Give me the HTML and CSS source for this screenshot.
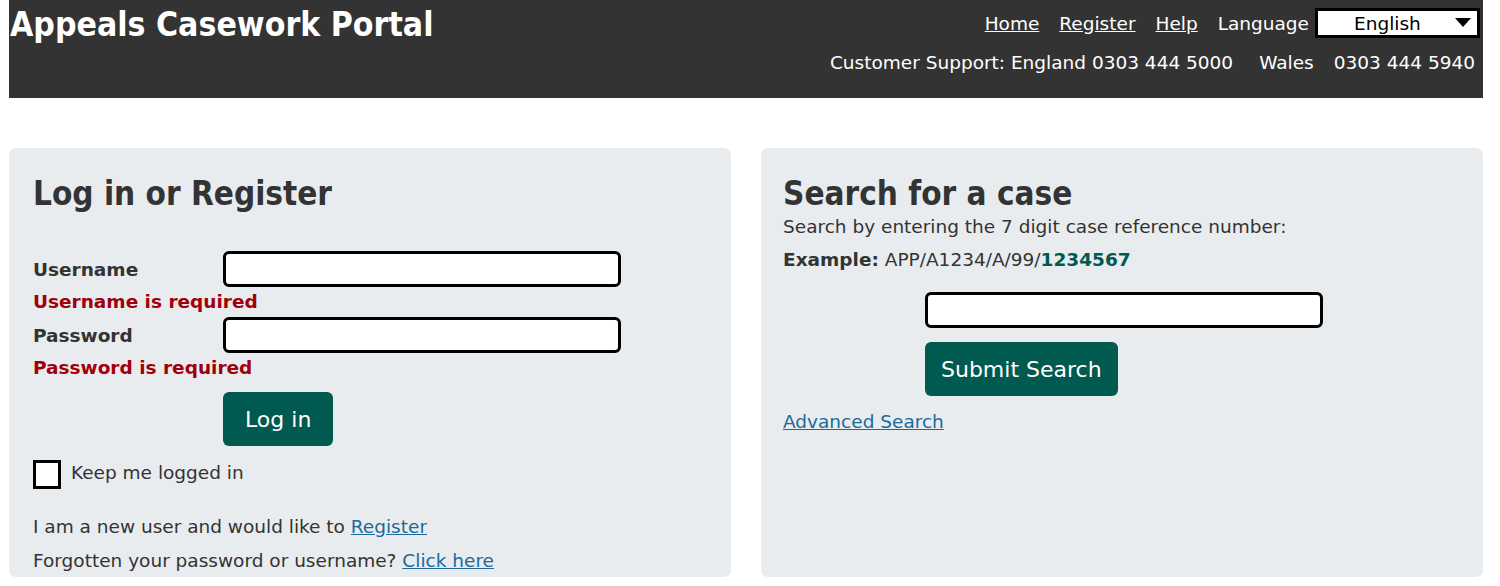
FILE: index.html
```html
<!DOCTYPE html>
<html lang="en">
<head>
<meta charset="utf-8">
<title>Appeals Casework Portal</title>
<link rel="stylesheet" href="styles.css">
</head>
<body>
<header class="site-header">
  <div class="brand">Appeals Casework Portal</div>
  <div class="header-right">
    <nav class="nav">
      <a href="#">Home</a>
      <a href="#">Register</a>
      <a href="#">Help</a>
      <span class="lang-label">Language</span>
      <div class="lang-select">
        <span>English</span>
        <svg class="caret" width="16" height="10" viewBox="0 0 16 10"><path d="M0 0 H16 L8 9 Z" fill="#000"/></svg>
      </div>
    </nav>
    <div class="support">Customer Support: England 0303 444 5000<span class="gap"></span>Wales<span class="gap2"></span>0303 444 5940</div>
  </div>
</header>

<main class="panels">
  <section class="panel login">
    <h1 class="panel-title">Log in or Register</h1>
    <div class="field-row first">
      <label class="field-label">Username</label>
      <div class="text-input"></div>
    </div>
    <div class="error">Username is required</div>
    <div class="field-row">
      <label class="field-label">Password</label>
      <div class="text-input"></div>
    </div>
    <div class="error">Password is required</div>
    <div class="button-row">
      <button class="btn">Log in</button>
    </div>
    <div class="check-row">
      <span class="checkbox"></span>
      <span>Keep me logged in</span>
    </div>
    <p class="line new-user">I am a new user and would like to <a href="#">Register</a></p>
    <p class="line forgot">Forgotten your password or username? <a href="#">Click here</a></p>
  </section>

  <section class="panel search">
    <h1 class="panel-title tight">Search for a case</h1>
    <p class="line">Search by entering the 7 digit case reference number:</p>
    <p class="line example"><b>Example:</b> APP/A1234/A/99/<b class="ref">1234567</b></p>
    <div class="search-form">
      <div class="text-input"></div>
      <button class="btn">Submit Search</button>
    </div>
    <a class="adv" href="#">Advanced Search</a>
  </section>
</main>
</body>
</html>
```

FILE: styles.css
```css
* { box-sizing: border-box; }
html, body { margin: 0; padding: 0; }
body {
  background: #fff;
  font-family: "DejaVu Sans", Verdana, sans-serif;
  color: #333;
  font-size: 18.5px;
  padding: 0 17px 0 9px;
}
.site-header {
  background: #333;
  color: #fff;
  height: 98px;
  display: flex;
  justify-content: space-between;
  align-items: flex-start;
  padding: 5px 8px 0 1px;
}
.brand {
  font-family: "DejaVu Sans Condensed", "DejaVu Sans", sans-serif;
  font-stretch: condensed;
  font-weight: bold;
  font-size: 33.5px;
  line-height: 40px;
}
.header-right {
  display: flex;
  flex-direction: column;
  align-items: flex-end;
}
.nav {
  display: flex;
  align-items: center;
  height: 34px;
  margin-right: -5px;
  margin-top: 1px;
}
.nav a {
  color: #fff;
  margin-right: 20px;
}
.lang-label { margin-right: 6px; }
.lang-select {
  width: 165px;
  height: 30px;
  background: #fff;
  border: 3px solid #000;
  color: #000;
  display: flex;
  align-items: center;
  justify-content: space-between;
  padding: 0 6px 0 36px;
}
.caret { display: block; }
.support {
  margin-top: 12px;
  line-height: 22px;
}
.gap { display: inline-block; width: 26px; }
.gap2 { display: inline-block; width: 20px; }

.panels {
  display: grid;
  grid-template-columns: 1fr 1fr;
  gap: 30px;
  margin-top: 50px;
}
.panel {
  background: #e9ecef;
  border-radius: 7px;
  padding: 24px 24px 6px;
  height: 429px;
}
.search { padding-left: 22px; }
.panel-title {
  margin: 0;
  font-family: "DejaVu Sans Condensed", "DejaVu Sans", sans-serif;
  font-stretch: condensed;
  font-size: 33px;
  line-height: 44px;
  font-weight: bold;
  color: #333;
}
.panel-title.tight { margin-bottom: -6px; }
.field-row {
  display: flex;
  align-items: center;
}
.field-row.first { margin-top: 35px; }
.field-label {
  width: 190px;
  font-weight: bold;
}
.text-input {
  width: 398px;
  height: 36px;
  background: #fff;
  border: 3px solid #000;
  border-radius: 6px;
}
.error {
  color: #a1000b;
  font-weight: bold;
  line-height: 30px;
}
.button-row { padding-left: 190px; margin-top: 9px; }
.btn {
  background: #005a4f;
  color: #fff;
  border: 0;
  border-radius: 6px;
  font-family: inherit;
  font-size: 22px;
  height: 54px;
  padding: 0 22px;
}
.check-row {
  display: flex;
  align-items: center;
  gap: 10px;
  margin-top: 14px;
}
.checkbox {
  width: 28px;
  height: 29px;
  border: 3px solid #000;
  background: #fff;
}
.check-row span:last-child { margin-top: -5px; }
.line { margin: 0; line-height: 33px; }
.new-user { margin-top: 21px; }
.forgot { margin-top: 1px; }
a { color: #1b6a9c; }
.ref { color: #005a4f; }
.search-form {
  padding-left: 142px;
  margin-top: 16px;
  display: flex;
  flex-direction: column;
  align-items: flex-start;
  gap: 14px;
}
.search .btn { padding: 0 16px; }
.adv { display: inline-block; margin-top: 15px; }
```
